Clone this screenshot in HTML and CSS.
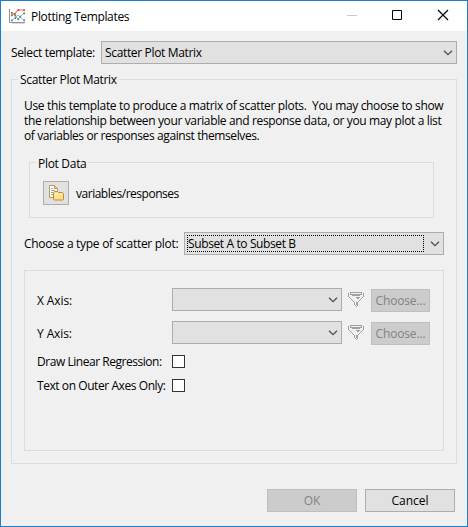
FILE: index.html
```html
<!DOCTYPE html>
<html lang="en">
<head>
<meta charset="utf-8">
<title>Plotting Templates</title>
<link rel="stylesheet" href="styles.css">
</head>
<body>
<svg width="0" height="0" class="defs" aria-hidden="true">
  <symbol id="chevron" viewBox="0 0 10 6"><path d="M1 .7 5 4.700 9 .7" fill="none" stroke="#505050" stroke-width="1.300"/></symbol>
  <symbol id="funnel" viewBox="0 0 16 16">
    <g fill="#a0a0a0" shape-rendering="crispEdges">
      <path d="M2 0h12v1H2zM2 2h12v1H2zM2 1h1v1H2zM13 1h1v1h-1z"/>
      <path d="M0 1h1v4H0zM1 5h1v1H1zM2 6h1v1H2zM3 7h1v1H3zM4 8h1v1H4zM5 9h1v1H5zM6 10h1v3H6zM7 13h1v1H7zM8 14h1v1H8z"/>
      <path d="M15 1h1v4h-1zM14 5h1v1h-1zM13 6h1v1h-1zM12 7h1v1h-1zM11 8h1v1h-1zM10 9h1v1h-1zM9 10h1v4H9z"/>
      <path d="M4 3h8v1H4zM8 5h4v1H8zM9 6h2v1H9zM8 10h1v3H8z"/>
    </g>
  </symbol>
</svg>
<div class="window">
  <header class="titlebar">
    <svg class="logo" width="17" height="17" viewBox="0 0 17 17">
      <path d="M.5 1v13.500H16" fill="none" stroke="#929292"/>
      <path d="M3 15.500h12" stroke="#d8d8d8"/>
      <path d="M3 12.500 6 10l3-3 3 3 3 2" fill="none" stroke="#9bbfdf"/>
      <path d="M3 7.500 6 5.500 9 2h6" fill="none" stroke="#f0988e" stroke-width="1.300"/>
      <path d="M3 4.500 6 7l3 4 3-3 3-3" fill="none" stroke="#86bd92"/>
      <g fill="#e04434"><path d="M2 6.500h1.700v1.700H2zM5 5h1.700v1.700H5zM8.500 1.200h1.700v1.700H8.500zM14.300 1.200H16v1.700h-1.700z"/></g>
      <g fill="#3a9148"><path d="M2 4h1.700v1.700H2zM5.500 6.700h1.700v1.700H5.500zM8.500 10.500h1.700v1.700H8.500zM14.300 4.500H16v1.700h-1.700z"/></g>
      <g fill="#4a80c4"><path d="M2 11.500h1.700v1.700H2zM5.500 9.300h1.700V11H5.500zM10.500 7.700h1.700v1.700h-1.700zM14.300 11.500H16v1.700h-1.700z"/></g>
    </svg>
    <span class="title t-title">Plotting Templates</span>
    <svg class="controls" width="102" height="12" viewBox="0 0 102 12">
      <path d="M0 6.500h10" stroke="#c8c8c8"/>
      <path d="M45.500 1.500h9v9h-9z" fill="none" stroke="#000"/>
      <path d="m91 1 10 10m0-10L91 11" stroke="#000" stroke-width="1.150"/>
    </svg>
  </header>

  <main class="content">
    <div class="row template-row">
      <label class="t-select">Select template:</label>
      <div class="combo grow"><span class="t-matrix">Scatter Plot Matrix</span><svg class="chevron"><use href="#chevron"/></svg></div>
    </div>

    <section class="group matrix">
      <h2 class="legend t-matrix">Scatter Plot Matrix</h2>
      <p class="description">
        <span class="t-p1">Use this template to produce a matrix of scatter plots.&nbsp; You may choose to show</span>
        <span class="t-p2">the relationship between your variable and response data, or you may plot a list</span>
        <span class="t-p3">of variables or responses against themselves.</span>
      </p>

      <section class="group plot-data">
        <h3 class="legend t-data">Plot Data</h3>
        <button class="data-button" aria-label="Select data">
          <svg width="16" height="16" viewBox="0 0 16 16">
            <path d="M1.500.5h5l3 3v9h-8z" fill="#fffdf3" stroke="#b89a54"/>
            <path d="M6.500.5v3h3" fill="#e8c878" stroke="#b89a54"/>
            <path d="M3 3.500h2M3 5.500h4M3 7.500h2M3 9.500h2" stroke="#8fa8d0"/>
            <path d="M5.500 14.500v-7l1-1h3l1 1h4l1 1v6l-1 .500h-8z" fill="#ffe08c" stroke="#c58a2a"/>
            <path d="M6.500 9h8" stroke="#fff3c8"/>
          </svg>
        </button>
        <span class="t-vars">variables/responses</span>
      </section>

      <div class="row type-row">
        <label class="t-type">Choose a type of scatter plot:</label>
        <div class="combo focused">
          <span class="focus t-subset">Subset A to Subset B</span>
          <svg class="chevron"><use href="#chevron"/></svg>
        </div>
      </div>

      <section class="panel">
        <div class="row axis-row">
          <label class="t-axis">X Axis:</label>
          <div class="combo axis-combo"><svg class="chevron"><use href="#chevron"/></svg></div>
          <svg class="funnel"><use href="#funnel"/></svg>
          <button class="button disabled choose t-choose" disabled>Choose...</button>
        </div>
        <div class="row axis-row">
          <label class="t-axis">Y Axis:</label>
          <div class="combo axis-combo"><svg class="chevron"><use href="#chevron"/></svg></div>
          <svg class="funnel"><use href="#funnel"/></svg>
          <button class="button disabled choose t-choose" disabled>Choose...</button>
        </div>
        <div class="row check-row"><label class="t-draw">Draw Linear Regression:</label><span class="checkbox"></span></div>
        <div class="row check-row"><label class="t-outer">Text on Outer Axes Only:</label><span class="checkbox"></span></div>
      </section>
    </section>

    <footer class="actions">
      <button class="button disabled" disabled>OK</button>
      <button class="button">Cancel</button>
    </footer>
  </main>
</div>
</body>
</html>
```
FILE: styles.css
```css
* { box-sizing: border-box; }
body { margin: 0; font: 12px/15px "Open Sans", "Noto Sans", sans-serif; color: #000; }
h2, h3, p { margin: 0; font: inherit; }
svg { display: block; flex: none; }
.defs { position: absolute; }
label, span { white-space: nowrap; }

.window { width: 468px; height: 527px; border: 1px solid #1a7fd0; background: #f0f0f0; }
.titlebar { display: flex; align-items: center; height: 30px; padding: 0 18px 0 8px; background: #fff; }
.title { margin: 1px 0 0 5px; }
.controls { margin: -2px 0 0 auto; }

.content { padding: 10px 10px 0; }
.row { display: flex; align-items: center; }
.grow { flex: 1; }
.template-row label { width: 90px; }

.combo { display: flex; align-items: center; height: 23px; padding: 0 3px; border: 1px solid #adadad; background: #e1e1e1; }
.chevron { width: 10px; height: 6px; margin-left: auto; }

.group { border: 1px solid #dcdcdc; }
.legend { width: max-content; height: 15px; margin-top: -8px; padding: 0 2px; background: #f0f0f0; }
.matrix { width: 446px; height: 385px; margin-top: 15px; padding: 0 12px; }
.matrix > .legend { margin-left: -6px; }
.description { margin-top: 11px; }
.description span { display: block; }

.plot-data { display: grid; grid-template: 10px 24px / 26px 1fr; column-gap: 7px; width: 405px; height: 56px; margin: 19px 0 0 5px; padding-left: 13px; align-items: center; row-gap: 8px; }
.plot-data > .legend { grid-column: 1 / 3; margin: -10px 0 0 -7px; }
.data-button { display: grid; place-items: center; width: 26px; height: 24px; padding: 0; border: 1px solid #adadad; background: #e1e1e1; }

.type-row { margin-top: 14px; }
.type-row label { width: 160px; }
.focused { width: 260px; padding-left: 2px; }
.focus { width: 237px; height: 17px; border: 1px dotted #000; }

.panel { width: 420px; height: 181px; margin-top: 15px; padding: 17px 13px 0 12px; border: 1px solid #dcdcdc; }
.axis-row { margin-bottom: 10px; }
.axis-row label, .check-row label { width: 135px; }
.axis-row label { padding-top: 2px; }
.axis-combo { width: 170px; }
.funnel { width: 16px; height: 16px; margin-left: 6px; }
.button { width: 90px; height: 23px; padding: 0 0 1px; border: 1px solid #adadad; background: #e1e1e1; font: inherit; color: #000; }
.disabled { border-color: #bfbfbf; background: #ccc; color: #838383; }
.choose { width: 59px; margin: 1px 0 -1px 7px; }
.check-row { height: 15px; margin-bottom: 9px; }
.checkbox { width: 13px; height: 13px; border: 1px solid #333; background: #fff; }

.actions { display: flex; justify-content: flex-end; gap: 8px; margin: 25px 2px 0 0; }

.t-title { letter-spacing: -.34px; }
.t-select { letter-spacing: -.36px; }
.t-matrix { letter-spacing: -.34px; }
.t-p1 { letter-spacing: -.34px; }
.t-p2 { letter-spacing: -.36px; }
.t-p3 { letter-spacing: -.4px; }
.t-data { letter-spacing: -.3px; }
.t-vars { letter-spacing: -.48px; }
.t-type { letter-spacing: -.29px; }
.t-subset { letter-spacing: -.38px; }
.t-axis { letter-spacing: -.1px; }
.t-draw { letter-spacing: -.46px; }
.t-outer { letter-spacing: -.43px; }
.t-choose { letter-spacing: -.15px; }
```
